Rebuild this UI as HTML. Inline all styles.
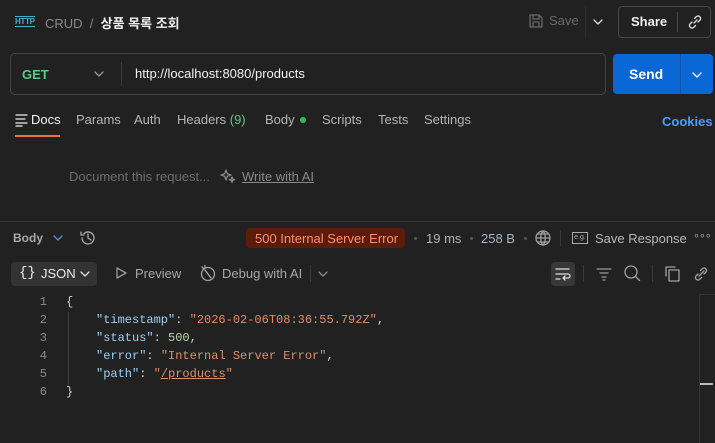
<!DOCTYPE html>
<html><head><meta charset="utf-8"><style>
*{margin:0;padding:0;box-sizing:border-box}
body{width:715px;height:443px;background:#212121;font-family:"Liberation Sans","Noto Sans CJK KR",sans-serif;color:#cfcfcf;position:relative;overflow:hidden;font-size:13px}
.a{position:absolute;white-space:nowrap}
svg{position:absolute;fill:none;stroke:#a0a0a0;stroke-width:1.3;stroke-linecap:round;stroke-linejoin:round}
.code{font-family:"Liberation Mono",monospace;font-size:12px}
.k{color:#9cd0f2}.s{color:#e08d6c}.n{color:#b9d3a5}.p{color:#d0d0d0}
.ln{color:#8a8a8a;width:20px;text-align:right;left:27px}
.dot{position:absolute;width:3px;height:3px;border-radius:50%;background:#555}
</style></head><body>
<!-- top bar -->
<div class="a" style="left:15px;top:16px;font-size:8px;color:#3fb3c9;font-weight:bold;letter-spacing:-0.3px;border-top:1px solid #3fb3c9;border-bottom:1px solid #3fb3c9;line-height:9px">HTTP</div>
<div class="a" style="left:45px;top:13px;color:#8a8a8a">CRUD &nbsp;/ &nbsp;<span style="color:#f0f0f0;font-weight:bold">상품 목록 조회</span></div>
<svg style="left:528px;top:13px" width="16" height="16" viewBox="0 0 16 16"><path d="M2 2h9l3 3v9H2z M5 2v4h6V2 M5 14V9h6v5" stroke="#666"/></svg>
<div class="a" style="left:549px;top:13px;color:#6a6a6a">Save</div>
<div class="a" style="left:585px;top:6px;width:1px;height:32px;background:#2c2c2c"></div>
<svg style="left:592px;top:17px" width="12" height="10"><path d="M2 3l4 4 4-4" stroke="#ddd"/></svg>
<div class="a" style="left:618px;top:6px;width:93px;height:32px;border:1px solid #4a4a4a;border-radius:4px"></div>
<div class="a" style="left:631px;top:14px;color:#f0f0f0;font-weight:bold">Share</div>
<div class="a" style="left:677px;top:12px;width:1px;height:20px;background:#4a4a4a"></div>
<svg style="left:686px;top:13px" width="18" height="18" viewBox="0 0 18 18"><path d="M8 10l3-3 M6 9l-2 2a2.5 2.5 0 0 0 3.5 3.5l2-2 M12 9l2-2a2.5 2.5 0 0 0-3.5-3.5l-2 2" stroke="#ddd"/></svg>
<!-- url bar -->
<div class="a" style="left:10px;top:53px;width:596px;height:42px;border:1px solid #454545;border-radius:5px"></div>
<div class="a" style="left:22px;top:67px;color:#5ec88a;font-weight:bold">GET</div>
<svg style="left:93px;top:69px" width="12" height="10"><path d="M2 3l4 4 4-4" stroke="#999"/></svg>
<div class="a" style="left:121px;top:62px;width:1px;height:24px;background:#3a3a3a"></div>
<div class="a" style="left:135px;top:66px;color:#f2f2f2">http://localhost:8080/products</div>
<div class="a" style="left:613px;top:54px;width:100px;height:40px;background:#0a68d6;border-radius:4px"></div>
<div class="a" style="left:680px;top:54px;width:1px;height:40px;background:#0a55b0"></div>
<div class="a" style="left:629px;top:66px;color:#fff;font-weight:bold;font-size:14px">Send</div>
<svg style="left:691px;top:70px" width="12" height="10"><path d="M2 3l4 4 4-4" stroke="#fff"/></svg>
<!-- tabs -->
<svg style="left:15px;top:113px" width="14" height="14"><path d="M1 2h11M1 6h9M1 10h11M1 13h6" stroke="#eee"/></svg>
<div class="a" style="left:31px;top:112px;color:#f2f2f2">Docs</div>
<div class="a" style="left:15px;top:135px;width:45px;height:2px;background:#e8743b"></div>
<div class="a" style="left:76px;top:112px;color:#b5b5b5">Params</div>
<div class="a" style="left:134px;top:112px;color:#b5b5b5">Auth</div>
<div class="a" style="left:177px;top:112px;color:#b5b5b5">Headers <span style="color:#5ec88a">(9)</span></div>
<div class="a" style="left:265px;top:112px;color:#b5b5b5">Body</div>
<div class="a" style="left:300px;top:117px;width:6px;height:6px;border-radius:50%;background:#2cbd5c"></div>
<div class="a" style="left:322px;top:112px;color:#b5b5b5">Scripts</div>
<div class="a" style="left:378px;top:112px;color:#b5b5b5">Tests</div>
<div class="a" style="left:424px;top:112px;color:#b5b5b5">Settings</div>
<div class="a" style="left:662px;top:114px;color:#4a9ff5;font-weight:bold">Cookies</div>
<!-- docs -->
<div class="a" style="left:69px;top:169px;color:#6e6e6e">Document this request...</div>
<svg style="left:220px;top:168px" width="16" height="16" viewBox="0 0 16 16"><path d="M6 2l1.3 3.7L11 7l-3.7 1.3L6 12 4.7 8.3 1 7l3.7-1.3z M12 9l.7 2 2 .7-2 .7-.7 2-.7-2-2-.7 2-.7z" stroke="#888"/></svg>
<div class="a" style="left:242px;top:169px;color:#8a8a8a;text-decoration:underline">Write with AI</div>
<div class="a" style="left:0;top:221px;width:715px;height:1px;background:#353535"></div>
<!-- response header -->
<div class="a" style="left:13px;top:231px;color:#a8a8a8;font-size:12px;font-weight:bold">Body</div>
<svg style="left:52px;top:233px" width="12" height="10"><path d="M2 3l4 4 4-4" stroke="#5a8fd0"/></svg>
<svg style="left:79px;top:229px" width="18" height="18" viewBox="0 0 18 18"><path d="M3 9a6 6 0 1 0 2-4.5 M2 3v3h3 M9 5v4l3 2" stroke="#aaa"/></svg>
<div class="a" style="left:246px;top:228px;width:159px;height:20px;background:#5b1c0c;border-radius:4px"></div>
<div class="a" style="left:255px;top:231px;color:#ff8e6e">500 Internal Server Error</div>
<div class="dot" style="left:414px;top:237px"></div>
<div class="a" style="left:426px;top:231px;color:#a8b4c0">19 ms</div>
<div class="dot" style="left:470px;top:237px"></div>
<div class="a" style="left:481px;top:231px;color:#a8b4c0">258 B</div>
<div class="dot" style="left:524px;top:237px"></div>
<svg style="left:534px;top:229px" width="18" height="18" viewBox="0 0 18 18"><circle cx="9" cy="9" r="7"/><path d="M2 9h14M9 2c-3 3-3 11 0 14M9 2c3 3 3 11 0 14M3.5 5h11M3.5 13h11"/></svg>
<div class="a" style="left:560px;top:230px;width:1px;height:16px;background:#3a3a3a"></div>
<div class="a" style="left:572px;top:232px;width:16px;height:12px;border:1px solid #aaa;font-size:7px;line-height:10px;text-align:center;color:#aaa">e.g.</div>
<div class="a" style="left:595px;top:231px;color:#b8b8b8">Save Response</div>
<div class="a" style="left:693px;top:229px;color:#aaa;font-size:11px;letter-spacing:-1px">∘∘∘</div>
<!-- toolbar -->
<div class="a" style="left:11px;top:262px;width:86px;height:24px;background:#333;border-radius:4px"></div>
<div class="a" style="left:19px;top:265px;color:#eee;font-size:14px;font-family:'Liberation Mono',monospace">{}</div>
<div class="a" style="left:41px;top:266px;color:#eee">JSON</div>
<svg style="left:79px;top:269px" width="12" height="10"><path d="M2 3l4 4 4-4" stroke="#ddd"/></svg>
<svg style="left:114px;top:266px" width="14" height="14"><path d="M3 2l9 5-9 5z" stroke="#999"/></svg>
<div class="a" style="left:135px;top:266px;color:#a8a8a8">Preview</div>
<svg style="left:199px;top:264px" width="18" height="18" viewBox="0 0 18 18"><circle cx="9" cy="10" r="6.5"/><path d="M6 6l6 8M3 3l1.5 1.5M6 1.5v2" stroke="#aaa"/></svg>
<div class="a" style="left:222px;top:266px;color:#a8a8a8">Debug with AI</div>
<div class="a" style="left:310px;top:265px;width:1px;height:17px;background:#3a3a3a"></div>
<svg style="left:317px;top:269px" width="12" height="10"><path d="M2 3l4 4 4-4" stroke="#888"/></svg>
<div class="a" style="left:551px;top:262px;width:24px;height:24px;background:#383838;border-radius:4px"></div>
<svg style="left:555px;top:266px" width="16" height="16"><path d="M1 3h13M1 8h12a2 2 0 0 1 0 4H8M10 10l-2 2 2 2M1 13h4" stroke="#ddd"/></svg>
<div class="a" style="left:583px;top:265px;width:1px;height:17px;background:#3a3a3a"></div>
<svg style="left:596px;top:266px" width="16" height="16"><path d="M1 3h14M4 7h8M6 11h4M7 14h2" stroke="#999"/></svg>
<svg style="left:623px;top:264px" width="18" height="18"><circle cx="8" cy="8" r="6"/><path d="M12.5 12.5l4 4"/></svg>
<div class="a" style="left:652px;top:265px;width:1px;height:17px;background:#3a3a3a"></div>
<svg style="left:665px;top:265px" width="16" height="17"><path d="M1 11V2h9M4 5h10v11H4z"/></svg>
<svg style="left:692px;top:265px" width="18" height="18" viewBox="0 0 18 18"><path d="M7 11l5-5 M6 9l-2 2a2.5 2.5 0 0 0 3.5 3.5l2-2 M12 9l2-2a2.5 2.5 0 0 0-3.5-3.5l-2 2"/></svg>
<!-- code -->
<div class="a" style="left:699px;top:294px;width:16px;height:149px;border-left:1px solid #333;border-top:1px solid #333"></div>
<div class="a" style="left:700px;top:383px;width:13px;height:2px;background:#bbb"></div>
<div class="a" style="left:68px;top:312px;width:1px;height:73px;background:#444"></div>
<div class="code">
<div class="a ln" style="top:295px">1</div><div class="a p" style="left:66px;top:295px">{</div>
<div class="a ln" style="top:313px">2</div><div class="a" style="left:96px;top:313px"><span class="k">"timestamp"</span><span class="p">: </span><span class="s">"2026-02-06T08:36:55.792Z"</span><span class="p">,</span></div>
<div class="a ln" style="top:331px">3</div><div class="a" style="left:96px;top:331px"><span class="k">"status"</span><span class="p">: </span><span class="n">500</span><span class="p">,</span></div>
<div class="a ln" style="top:349px">4</div><div class="a" style="left:96px;top:349px"><span class="k">"error"</span><span class="p">: </span><span class="s">"Internal Server Error"</span><span class="p">,</span></div>
<div class="a ln" style="top:367px">5</div><div class="a" style="left:96px;top:367px"><span class="k">"path"</span><span class="p">: </span><span class="s">"<u>/products</u>"</span></div>
<div class="a ln" style="top:385px">6</div><div class="a p" style="left:66px;top:385px">}</div>
</div>
</body></html>
